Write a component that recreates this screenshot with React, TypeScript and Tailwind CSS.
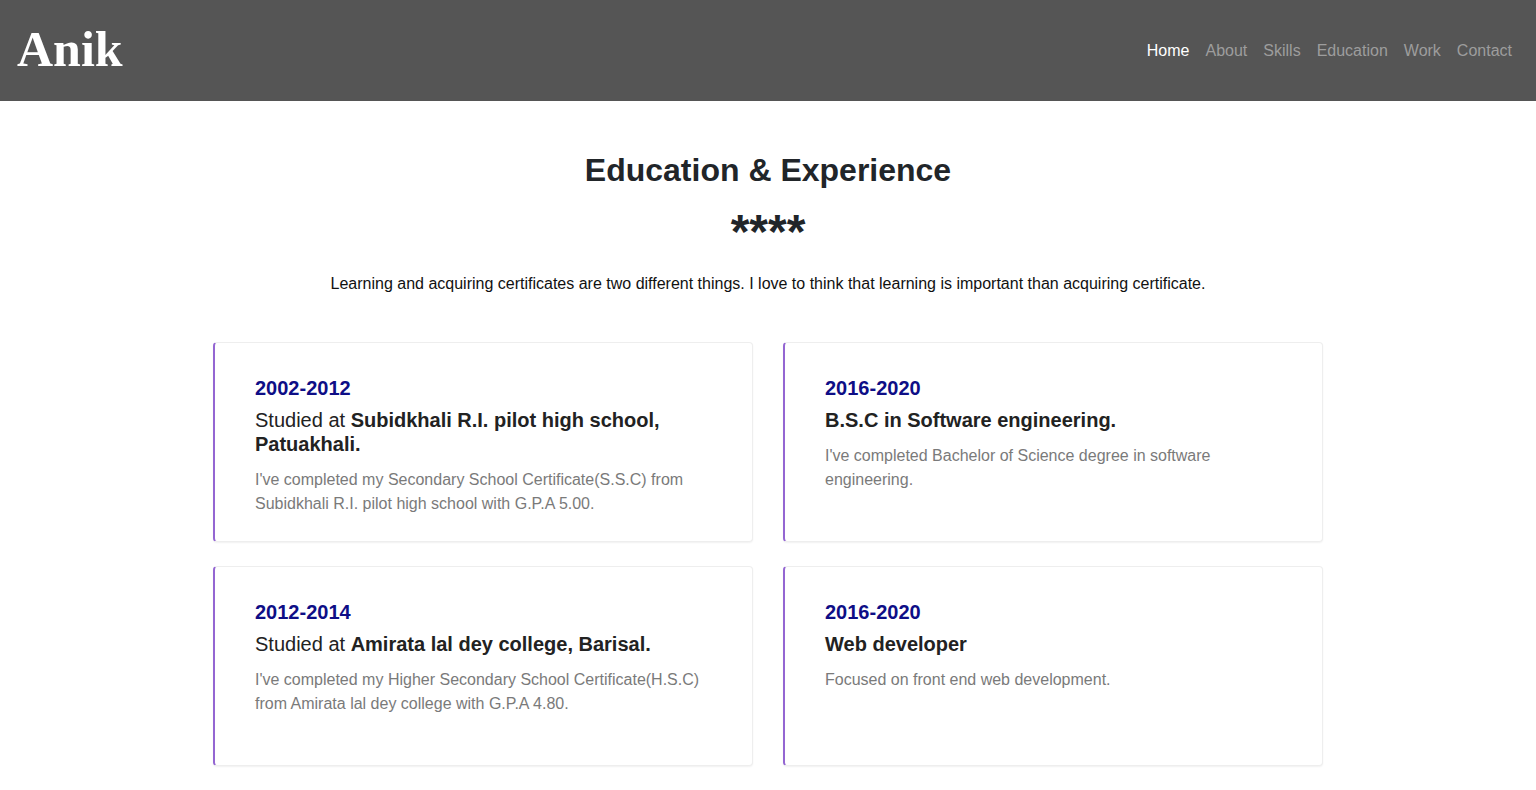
import React from "react";

interface Entry {
  years: string;
  prefix?: string;
  title: string;
  text: string;
}

const entries: Entry[] = [
  {
    years: "2002-2012",
    prefix: "Studied at ",
    title: "Subidkhali R.I. pilot high school, Patuakhali.",
    text: "I've completed my Secondary School Certificate(S.S.C) from Subidkhali R.I. pilot high school with G.P.A 5.00.",
  },
  {
    years: "2016-2020",
    title: "B.S.C in Software engineering.",
    text: "I've completed Bachelor of Science degree in software engineering.",
  },
  {
    years: "2012-2014",
    prefix: "Studied at ",
    title: "Amirata lal dey college, Barisal.",
    text: "I've completed my Higher Secondary School Certificate(H.S.C) from Amirata lal dey college with G.P.A 4.80.",
  },
  {
    years: "2016-2020",
    title: "Web developer",
    text: "Focused on front end web development.",
  },
  {
    years: "2020-Present",
    title: "Freelance web developer",
    text: "Building responsive websites for clients.",
  },
  {
    years: "2021-Present",
    title: "Open source contributor",
    text: "Contributing to front end projects.",
  },
];

const navLinks = ["Home", "About", "Skills", "Education", "Work", "Contact"];

function Card({ entry }: { entry: Entry }) {
  return (
    <div className="min-h-[200px] bg-white border border-[#eeeeee] border-l-2 border-l-[#9466d2] rounded-[4px] shadow-[0_1px_2px_rgba(0,0,0,0.06)] pt-[33px] pb-6 pl-10 pr-10">
      <h4 className="text-[20px] leading-6 font-bold text-[#0e0e86] mb-2">{entry.years}</h4>
      <h5 className="text-[20px] leading-6 text-[#222222] mb-3">
        {entry.prefix}
        <span className="font-bold">{entry.title}</span>
      </h5>
      <p className="text-[16px] leading-6 text-[#7a7a7a]">{entry.text}</p>
    </div>
  );
}

export default function App() {
  return (
    <div className="min-h-screen bg-white font-['Liberation_Sans',Arial,sans-serif] text-[#212529]">
      <header className="h-[101px] bg-[#555555] flex items-center justify-between pl-[17px] pr-4">
        <a className="text-[50px] leading-none font-bold text-white font-['Liberation_Serif','Times_New_Roman',serif] pb-1">
          Anik
        </a>
        <nav className="flex items-center">
          {navLinks.map((link, i) => (
            <a
              key={link}
              className={`px-2 text-[16px] leading-6 ${i === 0 ? "text-white" : "text-[#9d9d9d]"}`}
            >
              {link}
            </a>
          ))}
        </nav>
      </header>

      <section className="pt-[50px]">
        <div className="text-center">
          <h2 className="text-[32px] leading-[38px] font-bold text-[#212529]">Education &amp; Experience</h2>
          <div className="text-[48px] leading-[58px] font-bold text-[#212529] mt-[14px]">****</div>
          <p className="text-[16px] leading-6 text-[#111111] mt-[11px]">
            Learning and acquiring certificates are two different things. I love to think that learning is important than acquiring certificate.
          </p>
        </div>

        <div className="w-[1110px] mx-auto mt-[46px] grid grid-cols-2 gap-x-[30px] gap-y-6 pb-10">
          {entries.map((entry, i) => (
            <Card key={i} entry={entry} />
          ))}
        </div>
      </section>
    </div>
  );
}
